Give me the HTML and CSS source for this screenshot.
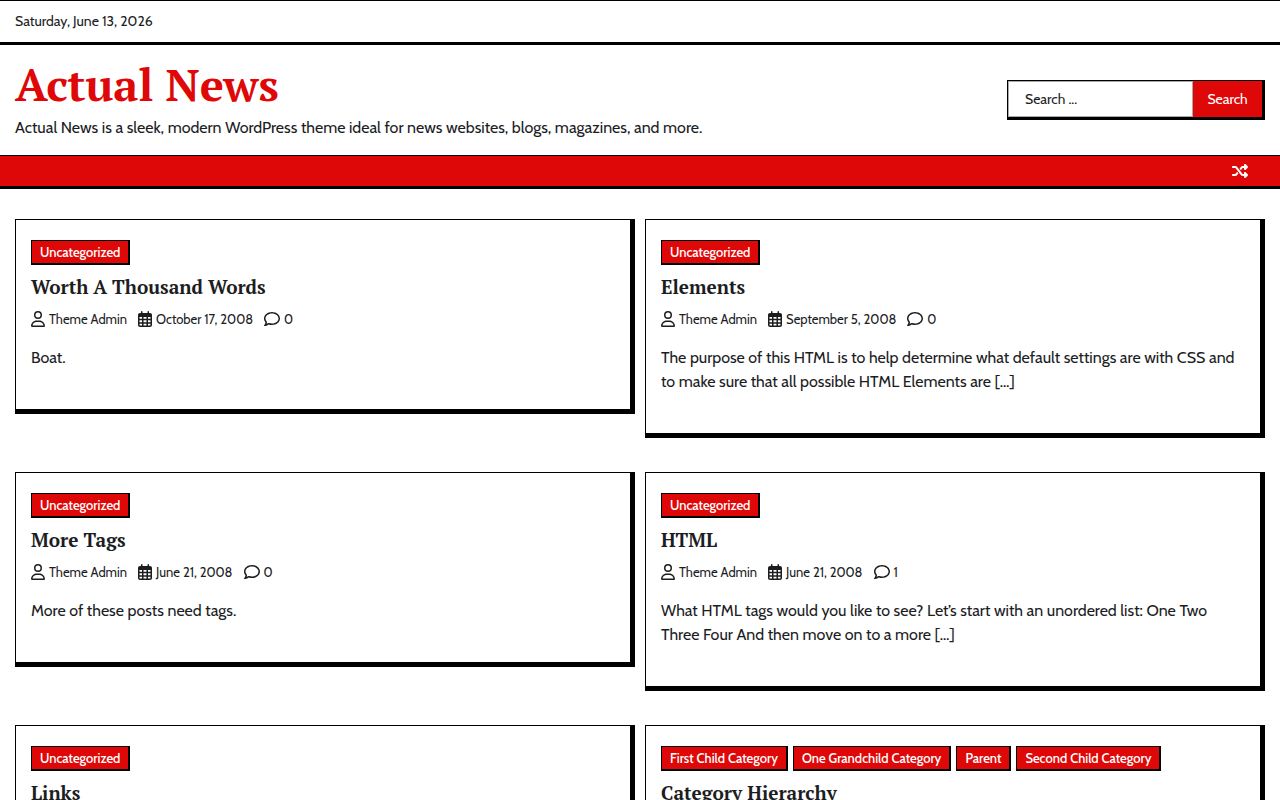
FILE: index.html
```html
<!DOCTYPE html>
<html lang="en">
<head>
  <meta charset="UTF-8">
  <meta name="viewport" content="width=device-width, initial-scale=1.0">
  <title>Actual News</title>
  <link rel="stylesheet" href="styles.css">
</head>
<body>

  <!-- icons -->
  <svg class="sprite" aria-hidden="true">
    <symbol id="icon-user" viewBox="0 0 448 512">
      <path d="M304 128a80 80 0 1 0 -160 0 80 80 0 1 0 160 0zM96 128a128 128 0 1 1 256 0A128 128 0 1 1 96 128zM49.3 464H398.7c-8.9-63.3-63.3-112-129-112H178.3c-65.7 0-120.1 48.7-129 112zM0 482.3C0 383.8 79.8 304 178.3 304h91.4C368.2 304 448 383.8 448 482.3c0 16.4-13.3 29.7-29.7 29.7H29.7C13.3 512 0 498.7 0 482.3z"/>
    </symbol>
    <symbol id="icon-calendar" viewBox="0 0 448 512">
      <path fill-rule="evenodd" d="M96 24a24 24 0 0 1 48 0V64H304V24a24 24 0 0 1 48 0V64h32c35 0 64 29 64 64V448c0 35-29 64-64 64H64c-35 0-64-29-64-64V128C0 93 29 64 64 64H96zM48 192v56h80v-56zM176 192v56h96v-56zM320 192v56h80v-56zM48 296v64h80v-64zM176 296v64h96v-64zM320 296v64h80v-64zM48 408v40c0 9 7 16 16 16h64v-56zM176 408v56h96v-56zM320 408v56h64c9 0 16-7 16-16v-40z"/>
    </symbol>
    <symbol id="icon-comment" viewBox="0 0 512 512">
      <path d="M123.6 391.3c12.9-9.4 29.6-11.8 44.6-6.4c26.5 9.6 56.2 15.1 87.8 15.1c124.7 0 208-80.5 208-160s-83.3-160-208-160S48 160.5 48 240c0 32 12.4 62.8 35.7 89.2c8.6 9.7 12.8 22.5 11.8 35.5c-1.4 18.1-5.7 34.7-11.3 49.4c17-7.9 31.1-16.7 39.4-22.7zM21.2 431.9c1.8-2.7 3.5-5.4 5.1-8.1c10-16.6 19.5-38.4 21.4-62.9C17.7 326.8 0 285.1 0 240C0 125.1 114.6 32 256 32s256 93.1 256 208s-114.6 208-256 208c-37.1 0-72.3-6.4-104.1-17.9c-11.9 8.7-31.3 20.6-54.3 30.6c-15.1 6.6-32.3 12.6-50.1 16.1c-.8 .2-1.6 .3-2.4 .5c-4.4 .8-8.7 1.5-13.2 1.9c-.2 0-.5 .1-.7 .1c-5.1 .5-10.2 .8-15.3 .8c-6.5 0-12.3-3.9-14.8-9.9c-2.5-6-1.1-12.8 3.4-17.4c4.1-4.2 7.8-8.7 11.3-13.5c1.7-2.3 3.3-4.6 4.8-6.9c.1-.2 .2-.3 .3-.5z"/>
    </symbol>
    <symbol id="icon-shuffle" viewBox="0 0 512 512">
      <path d="M403.8 34.4c12-5 25.7-2.2 34.9 6.9l64 64c6 6 9.4 14.1 9.4 22.6s-3.4 16.6-9.4 22.6l-64 64c-9.2 9.2-22.9 11.9-34.9 6.9s-19.8-16.6-19.8-29.6V160H352c-10.1 0-19.6 4.7-25.6 12.8L284 229.3 244 176l31.2-41.6C293.3 110.2 321.8 96 352 96h32V64c0-12.9 7.8-24.6 19.8-29.6zM164 282.7L204 336l-31.2 41.6C154.7 401.8 126.2 416 96 416H32c-17.7 0-32-14.3-32-32s14.3-32 32-32H96c10.1 0 19.6-4.7 25.6-12.8L164 282.7zm274.6 188c-9.2 9.2-22.9 11.9-34.9 6.9s-19.8-16.6-19.8-29.6V416H352c-30.2 0-58.7-14.2-76.8-38.4L121.6 172.8c-6-8.1-15.5-12.8-25.6-12.8H32c-17.7 0-32-14.3-32-32s14.3-32 32-32H96c30.2 0 58.7 14.2 76.8 38.4L326.4 339.2c6 8.1 15.5 12.8 25.6 12.8h32V320c0-12.9 7.8-24.6 19.8-29.6s25.7-2.2 34.9 6.9l64 64c6 6 9.4 14.1 9.4 22.6s-3.4 16.6-9.4 22.6l-64 64z"/>
    </symbol>
  </svg>

  <div class="topbar">Saturday, June 13, 2026</div>

  <header class="site-header">
    <div class="branding">
      <h1 class="site-title"><a href="#">Actual News</a></h1>
      <p class="tagline">Actual News is a sleek, modern WordPress theme ideal for news websites, blogs, magazines, and more.</p>
    </div>
    <form class="search-form" role="search">
      <input type="search" name="s" placeholder="Search ..." aria-label="Search for">
      <button type="submit">Search</button>
    </form>
  </header>

  <nav class="main-nav" aria-label="Primary">
    <a class="random-post" href="#" aria-label="View random post"><svg><use href="#icon-shuffle"/></svg></a>
  </nav>

  <main class="posts">
    <article class="post">
      <div class="cats"><a href="#">Uncategorized</a></div>
      <h2><a href="#">Worth A Thousand Words</a></h2>
      <div class="meta">
        <a href="#"><svg class="user"><use href="#icon-user"/></svg>Theme Admin</a>
        <a href="#"><svg class="calendar"><use href="#icon-calendar"/></svg>October 17, 2008</a>
        <a href="#"><svg class="comment"><use href="#icon-comment"/></svg>0</a>
      </div>
      <p>Boat.</p>
    </article>

    <article class="post">
      <div class="cats"><a href="#">Uncategorized</a></div>
      <h2><a href="#">Elements</a></h2>
      <div class="meta">
        <a href="#"><svg class="user"><use href="#icon-user"/></svg>Theme Admin</a>
        <a href="#"><svg class="calendar"><use href="#icon-calendar"/></svg>September 5, 2008</a>
        <a href="#"><svg class="comment"><use href="#icon-comment"/></svg>0</a>
      </div>
      <p>The purpose of this HTML is to help determine what default settings are with CSS and to make sure that all possible HTML Elements are […]</p>
    </article>

    <article class="post">
      <div class="cats"><a href="#">Uncategorized</a></div>
      <h2><a href="#">More Tags</a></h2>
      <div class="meta">
        <a href="#"><svg class="user"><use href="#icon-user"/></svg>Theme Admin</a>
        <a href="#"><svg class="calendar"><use href="#icon-calendar"/></svg>June 21, 2008</a>
        <a href="#"><svg class="comment"><use href="#icon-comment"/></svg>0</a>
      </div>
      <p>More of these posts need tags.</p>
    </article>

    <article class="post">
      <div class="cats"><a href="#">Uncategorized</a></div>
      <h2><a href="#">HTML</a></h2>
      <div class="meta">
        <a href="#"><svg class="user"><use href="#icon-user"/></svg>Theme Admin</a>
        <a href="#"><svg class="calendar"><use href="#icon-calendar"/></svg>June 21, 2008</a>
        <a href="#"><svg class="comment"><use href="#icon-comment"/></svg>1</a>
      </div>
      <p>What HTML tags would you like to see? Let’s start with an unordered list: One Two Three Four And then move on to a more […]</p>
    </article>

    <article class="post">
      <div class="cats"><a href="#">Uncategorized</a></div>
      <h2><a href="#">Links</a></h2>
    </article>

    <article class="post">
      <div class="cats">
        <a href="#">First Child Category</a>
        <a href="#">One Grandchild Category</a>
        <a href="#">Parent</a>
        <a href="#">Second Child Category</a>
      </div>
      <h2><a href="#">Category Hierarchy</a></h2>
    </article>
  </main>

</body>
</html>
```
FILE: styles.css
```css
* {
  box-sizing: border-box;
}

body {
  margin: 0;
  background: #fff;
  color: #1c1d1f;
  font-family: Cabin, Lato, sans-serif;
  font-size: 16px;
  line-height: 24px;
}

a {
  color: inherit;
  text-decoration: none;
}

h1, h2, p {
  margin: 0;
}

svg {
  fill: currentColor;
  flex: none;
}

.sprite {
  display: none;
}

.topbar {
  padding: 8px 15px 9px;
  border-top: 1px solid #000;
  border-bottom: 3px solid #000;
  font-size: 14px;
}

.site-header {
  display: flex;
  align-items: center;
  justify-content: space-between;
  gap: 30px;
  padding: 15px;
}

.site-title {
  margin-bottom: 8px;
  color: #df0808;
  font-family: "PT Serif", "Liberation Serif", serif;
  font-size: 45px;
  line-height: 48px;
}

.search-form {
  display: flex;
  width: 258px;
  border: 1px solid #000;
  border-right-width: 3px;
  border-bottom-width: 3px;
}

.search-form input {
  flex: 1;
  min-width: 0;
  height: 36px;
  padding: 0 16px;
  border: 1px solid #aaa;
  border-radius: 0;
  font: inherit;
  font-size: 14px;
}

.search-form input::placeholder {
  color: #1c1d1f;
  opacity: 1;
}

.search-form button {
  width: 69px;
  padding: 0;
  border: none;
  background: #df0808;
  color: #fff;
  font: inherit;
  font-size: 14px;
}

.main-nav {
  display: flex;
  justify-content: flex-end;
  padding: 7px 32px;
  border-top: 1px solid #000;
  border-bottom: 3px solid #000;
  background: #df0808;
  color: #fff;
}

.random-post svg {
  display: block;
  width: 16px;
  height: 16px;
}

.posts {
  display: grid;
  grid-template-columns: 1fr 1fr;
  align-items: start;
  gap: 34px 10px;
  padding: 30px 15px;
}

.post {
  padding: 20px 15px 39px;
  border: 1px solid #000;
  border-right-width: 5px;
  border-bottom-width: 5px;
}

.cats {
  display: flex;
  flex-wrap: wrap;
  gap: 5px;
}

.cats a {
  padding: 2px 8px;
  border: 1px solid #000;
  border-right-width: 2px;
  border-bottom-width: 2px;
  background: #df0808;
  color: #fff;
  font-size: 13px;
  font-weight: 500;
  line-height: 18px;
}

.post h2 {
  margin-top: 10px;
  font-family: "PT Serif", "Liberation Serif", serif;
  font-size: 19px;
  line-height: 24px;
}

.meta {
  display: flex;
  flex-wrap: wrap;
  gap: 11px;
  margin: 10px 0 17px;
  font-size: 13px;
  line-height: 20px;
}

.meta a {
  display: flex;
  align-items: center;
  gap: 4px;
}

.meta svg {
  width: 14px;
  height: 16px;
}

.meta .comment {
  width: 16px;
}
```
